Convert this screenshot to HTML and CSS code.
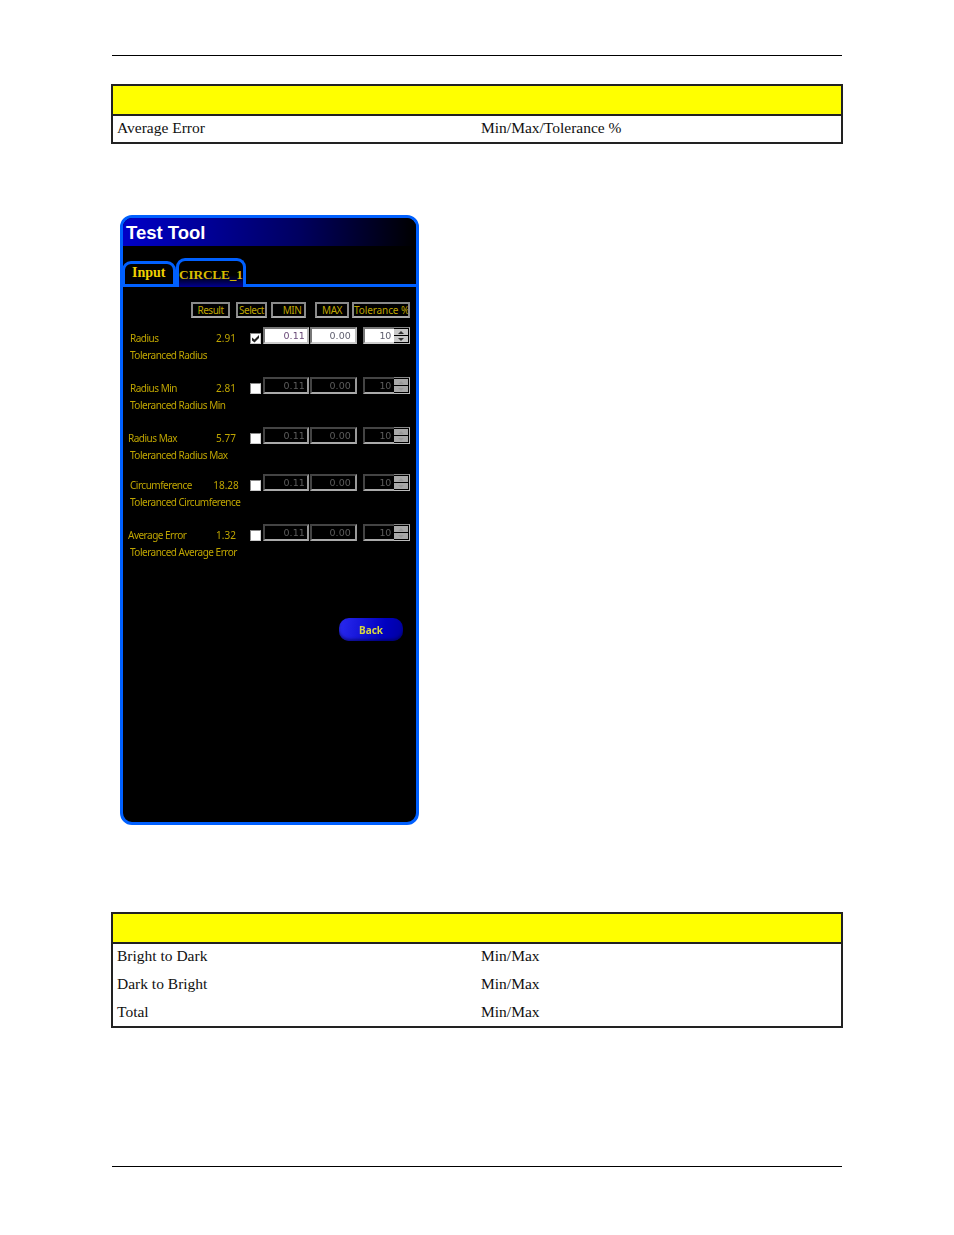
FILE: index.html
```html
<!DOCTYPE html>
<html lang="en">
<head>
  <meta charset="UTF-8">
  <title>Test Tool</title>
  <link rel="stylesheet" href="styles.css">
</head>
<body>
  <div class="page">
    <div class="rule"></div>

    <table class="spec spec-first">
      <tr class="spec-head"><td></td><td></td></tr>
      <tr><td>Average Error</td><td>Min/Max/Tolerance %</td></tr>
    </table>

    <!-- Test tool window -->
    <div class="app">
      <div class="titlebar">Test Tool</div>

      <div class="tabs">
        <div class="tab">Input</div>
        <div class="tab tab-active">CIRCLE_1</div>
      </div>

      <div class="heads">
        <div class="head head-result">Result</div>
        <div class="head head-select">Select</div>
        <div class="head head-min">MIN</div>
        <div class="head head-max">MAX</div>
        <div class="head head-tol">Tolerance %</div>
      </div>

      <div class="metrics">
        <div class="metric">
          <div class="name">Radius</div>
          <div class="value">2.91</div>
          <div class="check check-on">
            <svg viewBox="0 0 9 9" width="9" height="9"><path d="M1 3.5l2.5 2L8 1v3L3.5 8.500 1 6.500z" fill="#222"/></svg>
          </div>
          <div class="field field-first">0.11</div>
          <div class="field">0.00</div>
          <div class="spin">
            <div class="spin-val">10</div>
            <div class="spin-btns">
              <div class="spin-btn"><span class="arrow-up"></span></div>
              <div class="spin-btn"><span class="arrow-down"></span></div>
            </div>
          </div>
          <div class="tol-name">Toleranced Radius</div>
        </div>

        <div class="metric metric-off">
          <div class="name">Radius Min</div>
          <div class="value">2.81</div>
          <div class="check"></div>
          <div class="field field-first">0.11</div>
          <div class="field">0.00</div>
          <div class="spin">
            <div class="spin-val">10</div>
            <div class="spin-btns">
              <div class="spin-btn"><span class="arrow-up"></span></div>
              <div class="spin-btn"><span class="arrow-down"></span></div>
            </div>
          </div>
          <div class="tol-name">Toleranced Radius Min</div>
        </div>

        <div class="metric metric-off">
          <div class="name name-left">Radius Max</div>
          <div class="value">5.77</div>
          <div class="check"></div>
          <div class="field field-first">0.11</div>
          <div class="field">0.00</div>
          <div class="spin">
            <div class="spin-val">10</div>
            <div class="spin-btns">
              <div class="spin-btn"><span class="arrow-up"></span></div>
              <div class="spin-btn"><span class="arrow-down"></span></div>
            </div>
          </div>
          <div class="tol-name">Toleranced Radius Max</div>
        </div>

        <div class="metric metric-off metric-tight">
          <div class="name">Circumference</div>
          <div class="value">18.28</div>
          <div class="check"></div>
          <div class="field field-first">0.11</div>
          <div class="field">0.00</div>
          <div class="spin">
            <div class="spin-val">10</div>
            <div class="spin-btns">
              <div class="spin-btn"><span class="arrow-up"></span></div>
              <div class="spin-btn"><span class="arrow-down"></span></div>
            </div>
          </div>
          <div class="tol-name">Toleranced Circumference</div>
        </div>

        <div class="metric metric-off">
          <div class="name name-left">Average Error</div>
          <div class="value">1.32</div>
          <div class="check"></div>
          <div class="field field-first">0.11</div>
          <div class="field">0.00</div>
          <div class="spin">
            <div class="spin-val">10</div>
            <div class="spin-btns">
              <div class="spin-btn"><span class="arrow-up"></span></div>
              <div class="spin-btn"><span class="arrow-down"></span></div>
            </div>
          </div>
          <div class="tol-name">Toleranced Average Error</div>
        </div>
      </div>

      <div class="back">Back</div>
    </div>

    <table class="spec spec-second">
      <tr class="spec-head"><td></td><td></td></tr>
      <tr><td>Bright to Dark</td><td>Min/Max</td></tr>
      <tr><td>Dark to Bright</td><td>Min/Max</td></tr>
      <tr><td>Total</td><td>Min/Max</td></tr>
    </table>

    <div class="rule rule-bottom"></div>
  </div>
</body>
</html>
```

FILE: styles.css
```css
body {
  margin: 0;
  background: #fff;
  color: #000;
  font-family: "Liberation Serif", serif;
}

.page {
  width: 730px;
  margin-left: 112px;
  padding-top: 55px;
}

.rule {
  border-top: 1px solid #000;
}

.rule-bottom {
  margin-top: 138px;
}

/* spec tables */
.spec {
  width: 732px;
  margin-left: -1px;
  border-collapse: collapse;
  border: 2px solid #222;
  table-layout: fixed;
  font-size: 15.5px;
  color: #111;
}

.spec td {
  height: 28px;
  padding: 0 0 0 4px;
}

.spec td:first-child {
  width: 360px;
}

.spec-head td {
  height: 28px;
  background: #ff0;
  border-bottom: 2px solid #222;
}

.spec-head + tr td {
  height: 24px;
  padding-bottom: 2px;
}

.spec-first {
  margin-top: 28px;
}

.spec-second {
  margin-top: 87px;
}

/* test tool window */
.app {
  box-sizing: border-box;
  width: 299px;
  height: 610px;
  margin: 71px 0 0 8px;
  background: #000;
  border: 3px solid #0060ff;
  border-radius: 12px;
  font-family: "Noto Sans", sans-serif;
  font-size: 10px;
  letter-spacing: -0.5px;
  color: #bfa500;
  filter: blur(0.5px);
}

.titlebar {
  height: 28px;
  padding-left: 3px;
  border-radius: 9px 9px 0 0;
  background: linear-gradient(90deg, #0000c8, #000060 60%, #000 100%);
  font-family: "Liberation Sans", sans-serif;
  font-size: 18.5px;
  font-weight: bold;
  line-height: 30px;
  letter-spacing: 0;
  color: #fff;
}

.tabs {
  display: flex;
  align-items: flex-end;
  height: 38px;
  border-bottom: 3px solid #0060ff;
}

.tab {
  box-sizing: border-box;
  width: 54px;
  height: 26px;
  margin-left: -1px;
  margin-bottom: -3px;
  padding-left: 7px;
  border: 3px solid #0060ff;
  border-radius: 9px 9px 0 0;
  font-family: "Liberation Serif", serif;
  font-size: 14px;
  font-weight: bold;
  line-height: 18px;
  letter-spacing: 0;
  color: #f0d000;
}

.tab-active {
  width: 70px;
  height: 29px;
  margin-left: 0;
  padding: 2px 0 0 0;
  border-bottom: 0;
  background: linear-gradient(#000 55%, #000090);
  font-size: 13.2px;
  line-height: 24px;
  letter-spacing: -0.1px;
  color: #d8bc00;
  white-space: nowrap;
}

.heads {
  display: flex;
  margin-top: 15px;
}

.head {
  box-sizing: border-box;
  height: 16px;
  border: 2px solid #8a8a8a;
  border-bottom-color: #aaa;
  text-align: center;
  line-height: 13px;
  white-space: nowrap;
  overflow: hidden;
}

.head-result { width: 39px; margin-left: 68px; }
.head-select { width: 31px; margin-left: 6px; }
.head-min { width: 35px; margin-left: 4px; padding-left: 7px; }
.head-max { width: 34px; margin-left: 9px; }
.head-tol { width: 58px; margin-left: 3px; letter-spacing: -0.1px; }

.metrics {
  margin-top: 9px;
}

.metric {
  display: grid;
  grid-template-columns: 83px 40px 17px 47px 53px 47px;
  grid-auto-rows: min-content;
  height: 50px;
}

.metric-tight {
  margin-top: -3px;
}

.name {
  padding: 5px 0 0 7px;
  line-height: 12px;
}

.name-left {
  padding-left: 5px;
}

.value {
  padding-top: 5px;
  line-height: 12px;
  text-align: center;
  letter-spacing: 0;
}

.tol-name {
  grid-column: 1 / -1;
  margin-top: 5px;
  padding-left: 7px;
  line-height: 12px;
}

.check {
  box-sizing: border-box;
  width: 11px;
  height: 11px;
  margin: 6px 0 0 4px;
  background: #fff;
  border-top: 1px solid #888;
  border-left: 1px solid #888;
  border-right: 1px solid #ccc;
  border-bottom: 1px solid #ccc;
}

.check svg {
  display: block;
}

.field,
.spin-val {
  box-sizing: border-box;
  height: 17px;
  padding-right: 4px;
  background: #fff;
  border-top: 2px solid #777;
  border-left: 2px solid #777;
  border-right: 2px solid #bbb;
  border-bottom: 2px solid #ccc;
  text-align: right;
  font-family: "DejaVu Sans", sans-serif;
  font-size: 9.5px;
  line-height: 13px;
  letter-spacing: 0.1px;
  color: #606070;
}

.field {
  width: 47px;
}

.field-first {
  width: 46px;
  padding-right: 2px;
  color: #6a4a78;
}

.spin {
  display: flex;
  width: 47px;
  height: 17px;
}

.spin-val {
  flex: 1;
  padding-right: 3px;
  border-right: 0;
  letter-spacing: -0.3px;
}

.spin-btns {
  display: flex;
  flex-direction: column;
  gap: 1px;
  width: 16px;
  box-sizing: border-box;
  padding: 1px 1px 1px 0;
  border-top: 1px solid #888;
  border-right: 1px solid #bbb;
  border-bottom: 1px solid #bbb;
}

.spin-btn {
  display: flex;
  flex: 1;
  align-items: center;
  justify-content: center;
  background: #c8c8c8;
}

.arrow-up,
.arrow-down {
  width: 0;
  height: 0;
  border-left: 3px solid transparent;
  border-right: 3px solid transparent;
}

.arrow-up {
  border-bottom: 3px solid #333;
}

.arrow-down {
  border-top: 3px solid #333;
}

/* unticked rows grey out their inputs */
.metric-off .field,
.metric-off .spin-val {
  background: #000;
  border-top-color: #444;
  border-left-color: #444;
  border-right-color: #999;
  border-bottom-color: #aaa;
  color: #5c5c5c;
}

.metric-off .spin-val {
  border-right: 0;
}

.metric-off .spin-btn {
  background: #a8a8a8;
}

.metric-off .arrow-up {
  border-bottom-color: #999;
}

.metric-off .arrow-down {
  border-top-color: #999;
}

.back {
  width: 64px;
  height: 23px;
  margin: 44px 0 0 216px;
  border-radius: 10px;
  background: linear-gradient(100deg, #2a2af0, #0000c0 70%, #0000a0);
  box-shadow: inset 0 -2px 3px rgba(0, 0, 60, 0.5);
  text-align: center;
  font-weight: bold;
  line-height: 25px;
  letter-spacing: 0;
  color: #d8d840;
}
```
